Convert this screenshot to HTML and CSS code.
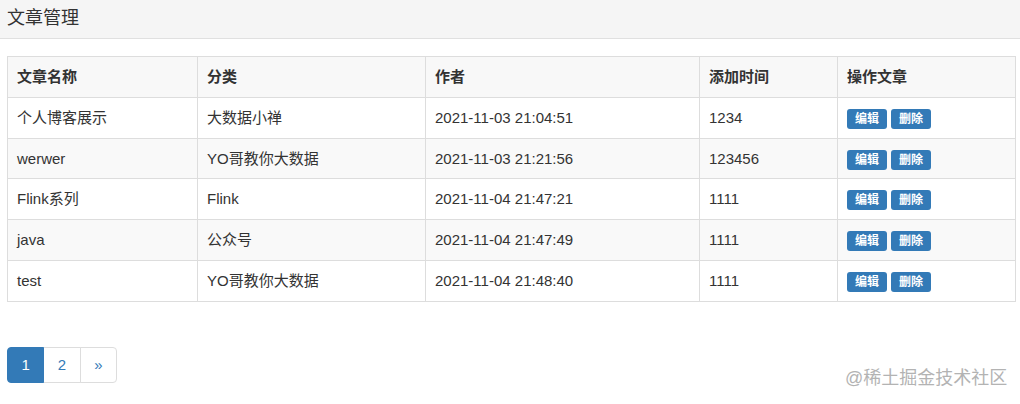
FILE: index.html
```html
<!DOCTYPE html>
<html lang="zh-CN">
<head>
<meta charset="utf-8">
<title>文章管理</title>
<link rel="stylesheet" href="styles.css">
</head>
<body>
<header class="topbar"><h1 class="title">文章管理</h1></header>
<main class="content">
  <table class="grid">
    <colgroup>
      <col class="c1"><col class="c2"><col class="c3"><col class="c4"><col class="c5">
    </colgroup>
    <thead>
      <tr><th>文章名称</th><th>分类</th><th>作者</th><th>添加时间</th><th>操作文章</th></tr>
    </thead>
    <tbody>
      <tr><td>个人博客展示</td><td>大数据小禅</td><td>2021-11-03 21:04:51</td><td>1234</td><td><div class="actions"><span class="tag">编辑</span><span class="tag">删除</span></div></td></tr>
      <tr><td>werwer</td><td>YO哥教你大数据</td><td>2021-11-03 21:21:56</td><td>123456</td><td><div class="actions"><span class="tag">编辑</span><span class="tag">删除</span></div></td></tr>
      <tr><td>Flink系列</td><td>Flink</td><td>2021-11-04 21:47:21</td><td>1111</td><td><div class="actions"><span class="tag">编辑</span><span class="tag">删除</span></div></td></tr>
      <tr><td>java</td><td>公众号</td><td>2021-11-04 21:47:49</td><td>1111</td><td><div class="actions"><span class="tag">编辑</span><span class="tag">删除</span></div></td></tr>
      <tr><td>test</td><td>YO哥教你大数据</td><td>2021-11-04 21:48:40</td><td>1111</td><td><div class="actions"><span class="tag">编辑</span><span class="tag">删除</span></div></td></tr>
    </tbody>
  </table>
  <nav class="pager">
    <a class="page active">1</a><a class="page">2</a><a class="page">»</a>
  </nav>
</main>
<div class="watermark">@稀土掘金技术社区</div>
</body>
</html>
```

FILE: styles.css
```css
html, body {
  margin: 0;
  padding: 0;
  background: #fff;
}
body {
  font-family: "Liberation Sans", Arial, "Noto Sans CJK SC", sans-serif;
  font-size: 15px;
  color: #333;
  position: relative;
  width: 1020px;
  height: 404px;
  overflow: hidden;
}
.topbar {
  height: 38px;
  background: #f5f5f5;
  border-bottom: 1px solid #e0e0e0;
}
.title {
  margin: 0;
  padding-left: 7px;
  font-size: 18px;
  font-weight: normal;
  line-height: 36px;
  color: #333;
}
.content {
  padding: 17px 0 0 7px;
}
.grid {
  width: 1008px;
  table-layout: fixed;
  border-collapse: collapse;
}
.c1 { width: 190px; }
.c2 { width: 228px; }
.c3 { width: 274px; }
.c4 { width: 138px; }
.c5 { width: 178px; }
.grid th, .grid td {
  border: 1px solid #ddd;
  padding: 9px 9px;
  line-height: 21.8px;
  text-align: left;
  vertical-align: top;
  white-space: nowrap;
}
.grid th {
  font-weight: bold;
  background: #f8f8f8;
}
.grid tbody tr:nth-child(even) td {
  background: #f9f9f9;
}
.actions {
  display: flex;
  gap: 4px;
  height: 21.8px;
  padding-top: 2px;
  box-sizing: border-box;
  align-items: flex-start;
}
.tag {
  display: inline-block;
  height: 20px;
  line-height: 20px;
  padding: 0 8px;
  background: #337ab7;
  color: #fff;
  font-size: 12px;
  font-weight: bold;
  border-radius: 3px;
}
.pager {
  display: flex;
  margin-top: 45px;
}
.page {
  display: block;
  height: 34px;
  line-height: 34px;
  padding: 0 13.5px;
  border: 1px solid #ddd;
  margin-left: -1px;
  color: #337ab7;
  font-size: 15px;
  background: #fff;
}
.page:first-child {
  margin-left: 0;
  border-radius: 4px 0 0 4px;
}
.page:last-child {
  border-radius: 0 4px 4px 0;
}
.page.active {
  background: #337ab7;
  border-color: #337ab7;
  color: #fff;
  position: relative;
  z-index: 1;
}
.watermark {
  position: absolute;
  left: 845px;
  top: 367px;
  font-size: 18px;
  line-height: 22px;
  color: #b3b3b3;
  white-space: nowrap;
}
```
